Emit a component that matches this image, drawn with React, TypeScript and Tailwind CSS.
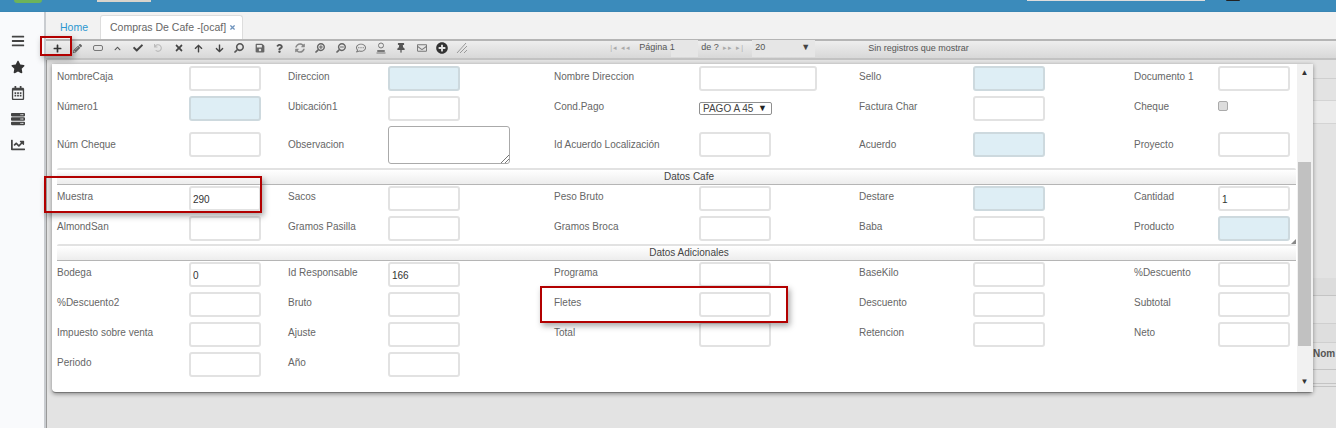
import {
  FaArrowDown,
  FaArrowUp,
  FaBars,
  FaChartLine,
  FaCheck,
  FaChevronUp,
  FaPencilAlt,
  FaPlus,
  FaPlusCircle,
  FaQuestion,
  FaRegCalendarAlt,
  FaRegCommentDots,
  FaRegEnvelope,
  FaSave,
  FaSearch,
  FaSearchMinus,
  FaSearchPlus,
  FaServer,
  FaStar,
  FaSyncAlt,
  FaThumbtack,
  FaTimes,
  FaUndo,
} from 'react-icons/fa'

type Field = { label: string; kind?: 'blue' | 'wide' | 'select' | 'check' | 'area'; value?: string }

const topRows: { fields: Field[]; height: string; labelPad: string }[] = [
  {
    height: 'h-[30px]',
    labelPad: 'pt-[4px]',
    fields: [
      { label: 'NombreCaja' },
      { label: 'Direccion', kind: 'blue' },
      { label: 'Nombre Direccion', kind: 'wide' },
      { label: 'Sello', kind: 'blue' },
      { label: 'Documento 1' },
    ],
  },
  {
    height: 'h-[36px]',
    labelPad: 'pt-[4px]',
    fields: [
      { label: 'Número1', kind: 'blue' },
      { label: 'Ubicación1' },
      { label: 'Cond.Pago', kind: 'select' },
      { label: 'Factura Char' },
      { label: 'Cheque', kind: 'check' },
    ],
  },
  {
    height: 'h-[36px]',
    labelPad: 'pt-[6px]',
    fields: [
      { label: 'Núm Cheque' },
      { label: 'Observacion', kind: 'area' },
      { label: 'Id Acuerdo Localización' },
      { label: 'Acuerdo', kind: 'blue' },
      { label: 'Proyecto' },
    ],
  },
]

const cafeRows: Field[][] = [
  [
    { label: 'Muestra', value: '290' },
    { label: 'Sacos' },
    { label: 'Peso Bruto' },
    { label: 'Destare', kind: 'blue' },
    { label: 'Cantidad', value: '1' },
  ],
  [
    { label: 'AlmondSan' },
    { label: 'Gramos Pasilla' },
    { label: 'Gramos Broca' },
    { label: 'Baba' },
    { label: 'Producto', kind: 'blue' },
  ],
]

const extraRows: Field[][] = [
  [
    { label: 'Bodega', value: '0' },
    { label: 'Id Responsable', value: '166' },
    { label: 'Programa' },
    { label: 'BaseKilo' },
    { label: '%Descuento' },
  ],
  [
    { label: '%Descuento2' },
    { label: 'Bruto' },
    { label: 'Fletes' },
    { label: 'Descuento' },
    { label: 'Subtotal' },
  ],
  [
    { label: 'Impuesto sobre venta' },
    { label: 'Ajuste' },
    { label: 'Total' },
    { label: 'Retencion' },
    { label: 'Neto' },
  ],
  [{ label: 'Periodo' }, { label: 'Año' }],
]

function Control({ field }: { field: Field }) {
  const box = 'h-[25px] rounded-[3px] border-2'
  if (field.kind === 'select') {
    return (
      <div className="mt-[6px] flex h-[13px] w-[73px] items-center justify-between rounded-[2px] border border-[#8f8f8f] bg-white pl-[3px] pr-[4px] text-[10px] text-[#444]">
        <span>PAGO A 45</span>
        <span className="text-[9px] text-[#222]">▼</span>
      </div>
    )
  }
  if (field.kind === 'check') {
    return <div className="mt-[5px] h-[10px] w-[10px] rounded-[2px] border border-[#aaa] bg-[#ddd]" />
  }
  if (field.kind === 'area') {
    return (
      <div className="relative -mt-[6px] h-[38px] w-[122px] rounded-[3px] border border-[#aaa] bg-white">
        <svg className="absolute bottom-0 right-0" width="9" height="9" viewBox="0 0 9 9">
          <path d="M1 9 9 1M5 9 9 5" stroke="#777" strokeWidth="1" fill="none" />
        </svg>
      </div>
    )
  }
  if (field.kind === 'blue') {
    return <div className={`${box} w-[72px] border-[#cdd9de] bg-[#deeef5]`} />
  }
  if (field.kind === 'wide') {
    return <div className={`${box} w-[118px] border-[#e2e2e2] bg-white`} />
  }
  return (
    <div className={`${box} flex w-[72px] items-center border-[#e2e2e2] bg-white pl-[2px] pt-[1px] text-[10px] text-[#333]`}>
      {field.value}
    </div>
  )
}

function FormRow({ fields, height, labelPad = 'pt-[4px]' }: { fields: Field[]; height: string; labelPad?: string }) {
  return (
    <div className={`grid grid-cols-[132px_99px_100px_166px_145px_160px_114px_161px_84px_72px] ${height}`}>
      {fields.map((field) => (
        <div key={field.label} className="contents">
          <div className={`${labelPad} text-[10px] leading-[13px] text-[#666]`}>{field.label}</div>
          <Control field={field} />
        </div>
      ))}
    </div>
  )
}

function SectionBar({ title }: { title: string }) {
  return (
    <div className="h-[17px] rounded-t-[2px] border-t-2 border-b border-t-[#e2e2e2] border-b-[#b5b5b5] bg-gradient-to-b from-white to-[#ededed] pl-[25px] text-center text-[10px] leading-[13px] text-[#444]">
      {title}
    </div>
  )
}

function StampIcon() {
  return (
    <svg width="12" height="12" viewBox="0 0 12 12" fill="none" stroke="#777" strokeWidth="1">
      <circle cx="6" cy="3.5" r="2.5" />
      <path d="M2.5 8.5h7v1h-7zM1.5 11h9" />
    </svg>
  )
}

const toolIcons = [
  <FaPlus size={9} className="text-[#333]" />,
  <FaPencilAlt size={9} className="text-[#666]" />,
  <span className="block h-[6px] w-[10px] rounded-[2px] border border-[#777]" />,
  <FaChevronUp size={7} className="text-[#555]" />,
  <FaCheck size={10} className="text-[#444]" />,
  <FaUndo size={8} className="text-[#bbb]" />,
  <FaTimes size={10} className="text-[#444]" />,
  <FaArrowUp size={9} className="text-[#444]" />,
  <FaArrowDown size={9} className="text-[#444]" />,
  <FaSearch size={10} className="-scale-x-100 text-[#555]" />,
  <FaSave size={10} className="text-[#666]" />,
  <FaQuestion size={9} className="text-[#555]" />,
  <FaSyncAlt size={10} className="text-[#888]" />,
  <FaSearchPlus size={10} className="-scale-x-100 text-[#666]" />,
  <FaSearchMinus size={10} className="-scale-x-100 text-[#666]" />,
  <FaRegCommentDots size={10} className="text-[#777]" />,
  <StampIcon />,
  <FaThumbtack size={10} className="text-[#555]" />,
  <FaRegEnvelope size={10} className="text-[#777]" />,
  <FaPlusCircle size={12} className="text-[#333]" />,
  <svg width="12" height="12" viewBox="0 0 12 12">
    <path d="M1 11 10 1M4 11 11 4M8 11 11 8" stroke="#999" strokeWidth="1" fill="none" />
  </svg>,
]

function Toolbar() {
  return (
    <div className="flex h-[21px] items-center whitespace-nowrap border-y-2 border-t-[#b5b5b5] border-b-[#c2c2c2] bg-gradient-to-b from-[#eeeeee] to-[#d8d8d8] pb-[3px] text-[9px] text-[#555]">
      <div className="ml-[1px] flex">
        {toolIcons.map((icon, i) => (
          <span key={i} className="flex h-[14px] w-[20.25px] items-center justify-center">
            {icon}
          </span>
        ))}
      </div>
      <div className="ml-[138px] flex items-center">
        <span className="w-[29px] text-[7px] tracking-[1px] text-[#aaa]">|◂ ◂◂</span>
        <span className="relative z-10 w-[32px]">Página 1</span>
        <span className="h-[17px] w-[27px] bg-[#e6e6e6]" />
        <span className="ml-[3px] w-[22px]">de ?</span>
        <span className="w-[29px] text-[7px] tracking-[1px] text-[#aaa]">▸▸ ▸|</span>
        <span className="flex h-[17px] w-[63px] items-center justify-between bg-[#e6e6e6] pl-[3px] pr-[5px]">
          20 <span className="text-[9px] text-[#444]">▼</span>
        </span>
        <span className="ml-[53px] pt-[1px]">Sin registros que mostrar</span>
      </div>
    </div>
  )
}

export default function App() {
  return (
    <div className="relative flex h-[428px] w-[1336px] flex-col overflow-hidden bg-[#e3e3e3] font-['Liberation_Sans',Arial,sans-serif]">
      <div className="relative h-[12px] shrink-0 border-b border-[#3a86b4] bg-[#3b8bbb]">
        <div className="absolute left-[14px] top-0 h-[3px] w-[28px] rounded-b-[4px] bg-[#6db35a]" />
        <div className="absolute left-[97px] top-0 h-[2px] w-[54px] bg-[#d9d4cc]" />
        <div className="absolute left-[1027px] top-0 h-[1px] w-[178px] bg-[#ddd]" />
        <div className="absolute left-[1226px] top-0 h-[1px] w-[14px] rounded-b-full bg-[#222]" />
      </div>

      <div className="flex min-h-0 flex-1">
        <aside className="flex w-[46px] shrink-0 flex-col items-center gap-[12px] border-r-2 border-[#c9ccd0] bg-[#f9fafc] pr-[8px] pt-[22px] text-[#444]">
          <FaBars size={14} />
          <FaStar size={14} className="text-[#333]" />
          <FaRegCalendarAlt size={14} />
          <FaServer size={14} />
          <FaChartLine size={14} />
        </aside>

        <main className="flex min-w-0 flex-1 flex-col">
          <div className="flex h-[27px] shrink-0 items-end bg-[#f2f2f2] pl-[14px]">
            <span className="mb-[5px] w-[40px] text-[10.5px] leading-[14px] text-[#2b97d0]">Home</span>
            <div className="flex h-[24px] w-[143px] items-center rounded-t-[3px] border border-b-0 border-[#ddd] bg-white pl-[9px] text-[10.5px] text-[#666]">
              Compras De Cafe -[ocaf]
              <FaTimes size={7} className="ml-[3px] text-[#6f94bd]" />
            </div>
          </div>
          <Toolbar />
        </main>
      </div>

      {/* restos de la grilla detras del popup */}
      <div className="absolute left-[46px] top-[60px] h-[368px] w-[6px] border-l border-[#999]" />
      <div className="absolute left-[1313px] top-[78px] h-[1px] w-[23px] bg-[#cfcfcf]" />
      <div className="absolute left-[1313px] top-[100px] h-[24px] w-[23px] border-y border-[#d4d4d4] bg-[#ebebeb]" />
      <div className="absolute left-[1313px] top-[278px] h-[18px] w-[23px] border-b border-[#c4c4c4] bg-[#dcdcdc]" />
      <div className="absolute left-[1313px] top-[323px] h-[20px] w-[23px] border-y border-[#cfcfcf] bg-[#dedede]" />
      <div className="absolute left-[1313px] top-[349px] text-[10px] font-bold leading-[10px] text-[#555]">
        Nom
      </div>
      <div className="absolute left-[1313px] top-[369px] h-[1px] w-[23px] bg-[#c4c4c4]" />
      <div className="absolute left-[1313px] top-[383px] h-[4px] w-[23px] border-y border-[#c4c4c4]" />

      <div className="absolute left-[52px] top-[64px] flex h-[329px] w-[1261px] rounded-b-[4px] border-b border-[#777] bg-white shadow-[0_1px_4px_rgba(0,0,0,0.4)]">
        <div className="w-[1245px] pl-[5px] pt-[2px]">
          {topRows.map((row) => (
            <FormRow key={row.fields[0].label} {...row} />
          ))}
          <div className="w-[1239px]">
            <SectionBar title="Datos Cafe" />
          </div>
          <div className="pt-[1px]">
            {cafeRows.map((fields) => (
              <FormRow key={fields[0].label} fields={fields} height="h-[30px]" />
            ))}
          </div>
          <div className="relative -mt-[2px] w-[1239px]">
            <SectionBar title="Datos Adicionales" />
            <div className="absolute -top-[5px] right-0 h-0 w-0 border-b-[5px] border-l-[5px] border-b-[#888] border-l-transparent" />
          </div>
          <div className="pt-[1px]">
            {extraRows.map((fields) => (
              <FormRow key={fields[0].label} fields={fields} height="h-[30px]" />
            ))}
          </div>
        </div>

        <div className="flex w-[16px] flex-col items-center bg-[#f1f1f1] pr-[1px]">
          <span className="h-[98px] pt-[5px] text-[8px] leading-[8px] text-[#333]">▲</span>
          <div className="h-[184px] w-[13px] bg-[#c1c1c1]" />
          <span className="mt-[32px] text-[8px] leading-[8px] text-[#333]">▼</span>
        </div>
      </div>

      <div className="absolute left-[40px] top-[36px] h-[20px] w-[32px] border-2 border-[#b20000] shadow-[2px_3px_6px_rgba(0,0,0,0.35)]" />
      <div className="absolute left-[44px] top-[176px] h-[37px] w-[218px] border-2 border-[#b20000] shadow-[2px_3px_6px_rgba(0,0,0,0.35)]" />
      <div className="absolute left-[540px] top-[286px] h-[37px] w-[248px] border-2 border-[#b20000] shadow-[2px_3px_6px_rgba(0,0,0,0.35)]" />
    </div>
  )
}
